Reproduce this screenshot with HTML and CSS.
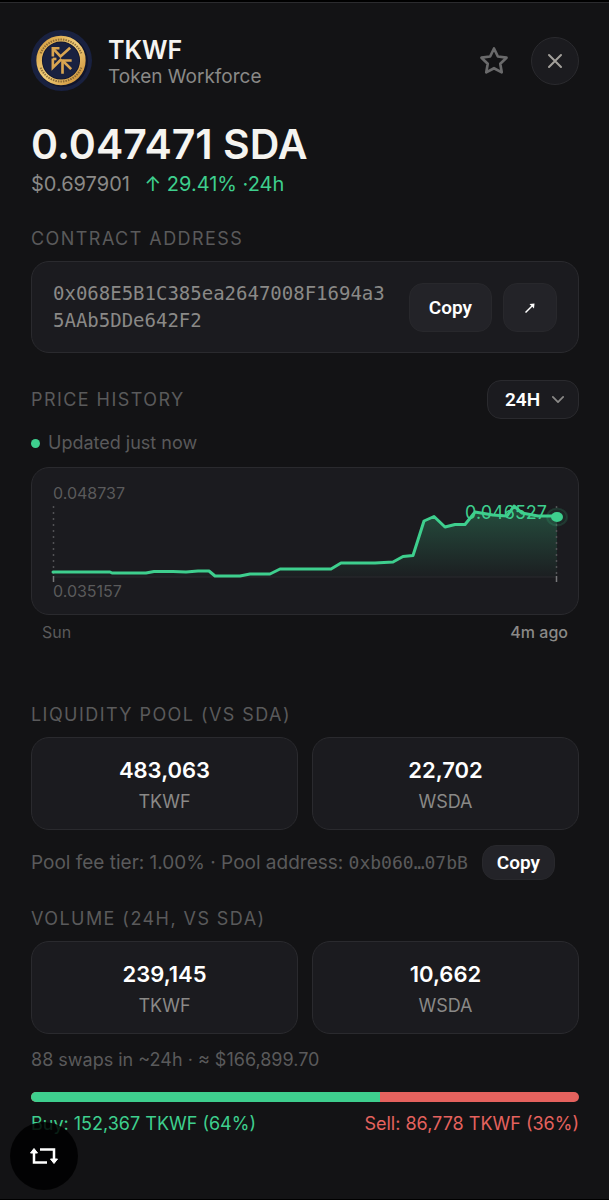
FILE: index.html
```html
<!DOCTYPE html>
<html lang="en">
<head>
    <meta charset="UTF-8">
    <meta name="viewport" content="width=device-width, initial-scale=1.0">
    <title>TKWF - Token Workforce</title>
    <link rel="stylesheet" href="styles.css">
</head>
<body>
    <main class="sheet">
        <header class="header">
            <svg class="avatar" viewBox="0 0 60 60" aria-hidden="true">
                <defs>
                    <linearGradient id="gold" x1="0" y1="0" x2="1" y2="1">
                        <stop offset="0" stop-color="#d49a3c"/>
                        <stop offset="0.5" stop-color="#f2cf7c"/>
                        <stop offset="1" stop-color="#c98b32"/>
                    </linearGradient>
                </defs>
                <circle cx="30" cy="30" r="30" fill="#192140"/>
                <circle cx="31" cy="31" r="25" fill="#10142a"/>
                <circle cx="29.500" cy="30" r="21.500" fill="none" stroke="url(#gold)" stroke-width="5.500"/>
                <path d="M9.500 23A21.500 21.500 0 0 1 49.500 23M9.500 37A21.500 21.500 0 0 0 49.500 37" fill="none" stroke="#6b5028" stroke-width="2" stroke-dasharray="1.500 1" opacity="0.7"/>
                <circle cx="29.500" cy="30" r="18" fill="#192140"/>
                <g fill="none" stroke="#d9a550" stroke-width="2.600">
                    <path d="M28 18H21.500V26"/>
                    <path d="M22 18.500L29 26L38.500 17.500"/>
                    <path d="M21.500 28V37L30 28.500"/>
                    <path d="M21.500 28.500H25"/>
                    <path d="M40 30H31V43"/>
                    <path d="M31 30L39.500 38.500"/>
                </g>
            </svg>
            <div class="token">
                <h1 class="symbol">TKWF</h1>
                <p class="name">Token Workforce</p>
            </div>
            <button class="star" type="button" aria-label="Add to favourites">
                <svg viewBox="0 0 24 24" width="32" height="32"><path d="M12 2.600l2.900 6 6.500.900-4.700 4.500 1.100 6.500L12 17.400l-5.800 3.100 1.100-6.500-4.700-4.500 6.500-.900z"/></svg>
            </button>
            <button class="close" type="button" aria-label="Close">
                <svg viewBox="0 0 16 16" width="16" height="16"><path d="M2 2l12 12M14 2L2 14"/></svg>
            </button>
        </header>

        <p class="price">0.047471 SDA</p>
        <p class="usd">$0.697901 <span class="change">↑ 29.41% ·24h</span></p>

        <section class="section">
            <h2 class="label">Contract address</h2>
            <div class="card address">
                <code class="hash">0x068E5B1C385ea2647008F1694a35AAb5DDe642F2</code>
                <button class="btn" type="button">Copy</button>
                <button class="btn btn-link" type="button" aria-label="Open in explorer">
                    <svg viewBox="0 0 12 12" width="12" height="12"><path class="shaft" d="M1.500 11.500L8 5"/><path class="head" d="M5.500 3L10.500 2.500L10 7.500z"/></svg>
                </button>
            </div>
        </section>

        <section class="section history">
            <div class="history-head">
                <h2 class="label"><label for="range">Price history</label></h2>
                <div class="range-wrap">
                    <select class="range" id="range">
                        <option selected>24H</option>
                        <option>7D</option>
                        <option>30D</option>
                    </select>
                    <svg class="chevron" viewBox="0 0 14 8" width="12" height="7"><path d="M1 1l6 6 6-6"/></svg>
                </div>
            </div>
            <p class="updated">Updated just now</p>
            <div class="card chart">
                <p class="bound">0.048737</p>
                <div class="plot">
                    <svg viewBox="0 0 504 78" preserveAspectRatio="none">
                        <defs>
                            <linearGradient id="area" gradientUnits="userSpaceOnUse" x1="0" y1="0" x2="0" y2="74">
                                <stop offset="0" stop-color="#3ecf8e" stop-opacity="0.3"/>
                                <stop offset="1" stop-color="#3ecf8e" stop-opacity="0.02"/>
                            </linearGradient>
                        </defs>
                        <path fill="url(#area)" d="M0 69H57L59 70H93L101 68.500H120L133 69L145 68H156L162 73H187L197 71H217L227 66H278L288 60H322L340 59L350 53.500L360 52.500L371 18L381 13.500L392 24L402 21.500H412L422 9L440 12L454 13L461 3L469 10L485 13H504V74H0Z"/>
                        <path class="base" d="M0 74H504"/>
                        <path class="guide" d="M0.500 3V73M503.500 3V73"/>
                        <path class="tick" d="M0.500 73V79M503.500 73V79"/>
                        <path class="line" d="M0 69H57L59 70H93L101 68.500H120L133 69L145 68H156L162 73H187L197 71H217L227 66H278L288 60H322L340 59L350 53.500L360 52.500L371 18L381 13.500L392 24L402 21.500H412L422 9L440 12L454 13L461 3L469 10L485 13H504"/>
                        <ellipse class="halo" cx="504" cy="14" rx="10" ry="8.500"/>
                        <ellipse cx="504" cy="14" rx="6" ry="5" fill="#3ecf8e"/>
                    </svg>
                    <span class="current">0.046527</span>
                </div>
                <p class="bound">0.035157</p>
            </div>
            <div class="times"><span>Sun</span><span class="latest">4m ago</span></div>
        </section>

        <section class="section pool">
            <h2 class="label">Liquidity pool (vs SDA)</h2>
            <div class="pair">
                <div class="card stat"><strong>483,063</strong><span>TKWF</span></div>
                <div class="card stat"><strong>22,702</strong><span>WSDA</span></div>
            </div>
            <div class="pool-info">
                <p>Pool fee tier: 1.00% · Pool address: <code class="short">0xb060…07bB</code></p>
                <button class="btn btn-small" type="button">Copy</button>
            </div>
        </section>

        <section class="section">
            <h2 class="label">Volume (24h, vs SDA)</h2>
            <div class="pair">
                <div class="card stat"><strong>239,145</strong><span>TKWF</span></div>
                <div class="card stat"><strong>10,662</strong><span>WSDA</span></div>
            </div>
            <p class="swaps">88 swaps in ~24h · ≈ $166,899.70</p>
            <div class="bar"><div class="bar-buy" style="width: 63.7%"></div></div>
            <div class="legend">
                <span class="buy">Buy: 152,367 TKWF (64%)</span>
                <span class="sell">Sell: 86,778 TKWF (36%)</span>
            </div>
        </section>
    </main>

    <button class="swap" type="button" aria-label="Swap">
        <svg viewBox="0 0 30 20" width="30" height="20">
            <path class="shaft" d="M5 6V16.500H18M11 3.500H25V14"/>
            <path class="head" d="M5 2.500L1.500 7H8.500zM25 17.500L21.500 13H28.500z"/>
        </svg>
    </button>
</body>
</html>
```
FILE: styles.css
```css
* {
    box-sizing: border-box;
}

body {
    margin: 0;
    background: #000;
    color: #f5f4f0;
    font-family: Inter, sans-serif;
    font-size: 18px;
    line-height: 24px;
}

h1, h2, p {
    margin: 0;
    font-weight: 400;
}

button, select {
    font-family: Roboto, sans-serif;
    color: #fff;
    cursor: pointer;
}

.sheet {
    min-height: calc(100vh - 3px);
    margin: 2px 0 1px;
    padding: 27px 30px 24px 31px;
    background: #131315;
    border-top: 1px solid #2b2b2e;
}

.header {
    display: flex;
    align-items: center;
}

.avatar {
    width: 61px;
    height: 61px;
    margin-right: 16px;
}

.token {
    flex: 1;
    padding-top: 5px;
}

.symbol {
    font-size: 25px;
    line-height: 28px;
    font-weight: 600;
}

.name {
    font-size: 19px;
    line-height: 26px;
    color: #8a8987;
}

.star {
    display: flex;
    margin-right: 21px;
    padding: 0;
    border: 0;
    background: none;
}

.star path {
    fill: none;
    stroke: #6a6a6b;
    stroke-width: 2;
    stroke-linejoin: round;
}

.close {
    display: flex;
    align-items: center;
    justify-content: center;
    width: 48px;
    height: 48px;
    border: 1px solid #2a2a2e;
    border-radius: 50%;
    background: #1b1b1f;
}

.close path {
    fill: none;
    stroke: #a3a09b;
    stroke-width: 2;
    stroke-linecap: round;
}

.price {
    margin-top: 29px;
    font-size: 41px;
    line-height: 48px;
    font-weight: 600;
}

.usd {
    margin-top: 3px;
    font-size: 20px;
    line-height: 26px;
    color: #8a8987;
}

.change {
    margin-left: 9px;
    color: #3ecf8e;
}

.section {
    margin-top: 30px;
}

.label {
    margin-bottom: 10px;
    font-size: 18px;
    letter-spacing: 0.08em;
    text-transform: uppercase;
    color: #5a5a5b;
}

.card {
    border: 1px solid #2a2a2e;
    border-radius: 18px;
    background: #1b1b1f;
}

.address {
    display: flex;
    align-items: center;
    gap: 11px;
    padding: 18px 21px;
}

.hash {
    flex: 1;
    margin-right: 6px;
    font-family: "DejaVu Sans Mono", monospace;
    font-size: 19px;
    line-height: 27px;
    word-break: break-all;
    color: #8a8987;
}

.btn {
    height: 49px;
    padding: 0 19px;
    border: 1px solid #28282c;
    border-radius: 14px;
    background: #232328;
    font-size: 19px;
    font-weight: 600;
}

.btn-link {
    display: flex;
    align-items: center;
    padding: 0 20px;
}

.btn-link .shaft {
    fill: none;
    stroke: #fff;
    stroke-width: 1.5;
}

.btn-link .head {
    fill: #fff;
}

.btn-small {
    height: 35px;
    padding: 0 14px;
}

.history {
    margin-top: 27px;
}

.history-head {
    display: flex;
    align-items: center;
    justify-content: space-between;
}

.history-head .label {
    margin: 0;
}

.range-wrap {
    position: relative;
}

.range {
    display: block;
    width: 92px;
    height: 39px;
    padding: 0 17px;
    border: 1px solid #2a2a2e;
    border-radius: 14px;
    background: #1b1b1f;
    font-size: 19px;
    font-weight: 600;
    appearance: none;
}

.chevron {
    position: absolute;
    top: 16px;
    right: 15px;
    fill: none;
    stroke: #8a8987;
    stroke-width: 2;
    stroke-linecap: round;
    stroke-linejoin: round;
    pointer-events: none;
}

.updated {
    display: flex;
    align-items: center;
    gap: 8px;
    margin: 12px 0;
    color: #5a5a5b;
}

.updated::before {
    content: "";
    width: 9px;
    height: 9px;
    border-radius: 50%;
    background: #3ecf8e;
}

.chart {
    padding: 15px 21px 13px;
}

.bound {
    font-size: 16px;
    line-height: 20px;
    color: #5a5a5b;
}

.plot {
    position: relative;
}

.plot svg {
    display: block;
    width: 100%;
    height: 78px;
    overflow: visible;
}

.line {
    fill: none;
    stroke: #3ecf8e;
    stroke-width: 3;
    stroke-linejoin: round;
    stroke-linecap: round;
}

.base {
    stroke: #2b2b2f;
}

.guide {
    stroke: #515154;
    stroke-width: 1.5;
    stroke-dasharray: 2 4;
}

.tick {
    stroke: #77777a;
    stroke-width: 1.5;
}

.halo {
    fill: #3ecf8e;
    fill-opacity: 0.08;
    stroke: #3ecf8e;
    stroke-opacity: 0.14;
    stroke-width: 2;
}

.current {
    position: absolute;
    top: 0;
    right: 10px;
    font-size: 18px;
    line-height: 20px;
    color: #3ecf8e;
}

.times {
    display: flex;
    justify-content: space-between;
    margin-top: 5px;
    padding: 0 11px;
    font-size: 16px;
    color: #5a5a5b;
}

.latest {
    color: #8a8987;
    font-weight: 500;
}

.pool {
    margin-top: 59px;
}

.pair {
    display: grid;
    grid-template-columns: 1fr 1fr;
    gap: 14px;
}

.stat {
    display: flex;
    flex-direction: column;
    align-items: center;
    gap: 2px;
    padding: 16px 12px 13px;
}

.stat strong {
    font-size: 22px;
    line-height: 32px;
    font-weight: 600;
    color: #fff;
}

.stat span {
    line-height: 28px;
    color: #8a8987;
}

.pool-info {
    display: flex;
    align-items: center;
    gap: 14px;
    margin: 15px 0 -3px;
    font-size: 19px;
    color: #5a5a5b;
}

.short {
    font-family: "DejaVu Sans Mono", monospace;
    font-size: 18px;
}

.swaps {
    margin: 14px 0 20px;
    color: #5a5a5b;
}

.bar {
    height: 10px;
    overflow: hidden;
    border-radius: 5px;
    background: #e5625e;
}

.bar-buy {
    height: 100%;
    background: #3ecf8e;
}

.legend {
    display: flex;
    justify-content: space-between;
    margin-top: 10px;
}

.buy {
    color: #3ecf8e;
}

.sell {
    color: #e5625e;
}

.swap {
    position: fixed;
    left: 10px;
    bottom: 10px;
    display: flex;
    align-items: center;
    justify-content: center;
    width: 68px;
    height: 68px;
    border: 0;
    border-radius: 50%;
    background: rgba(0, 0, 0, 0.85);
}

.swap .shaft {
    fill: none;
    stroke: #fff;
    stroke-width: 2.5;
}

.swap .head {
    fill: #fff;
    stroke: #fff;
    stroke-linejoin: round;
}
```
